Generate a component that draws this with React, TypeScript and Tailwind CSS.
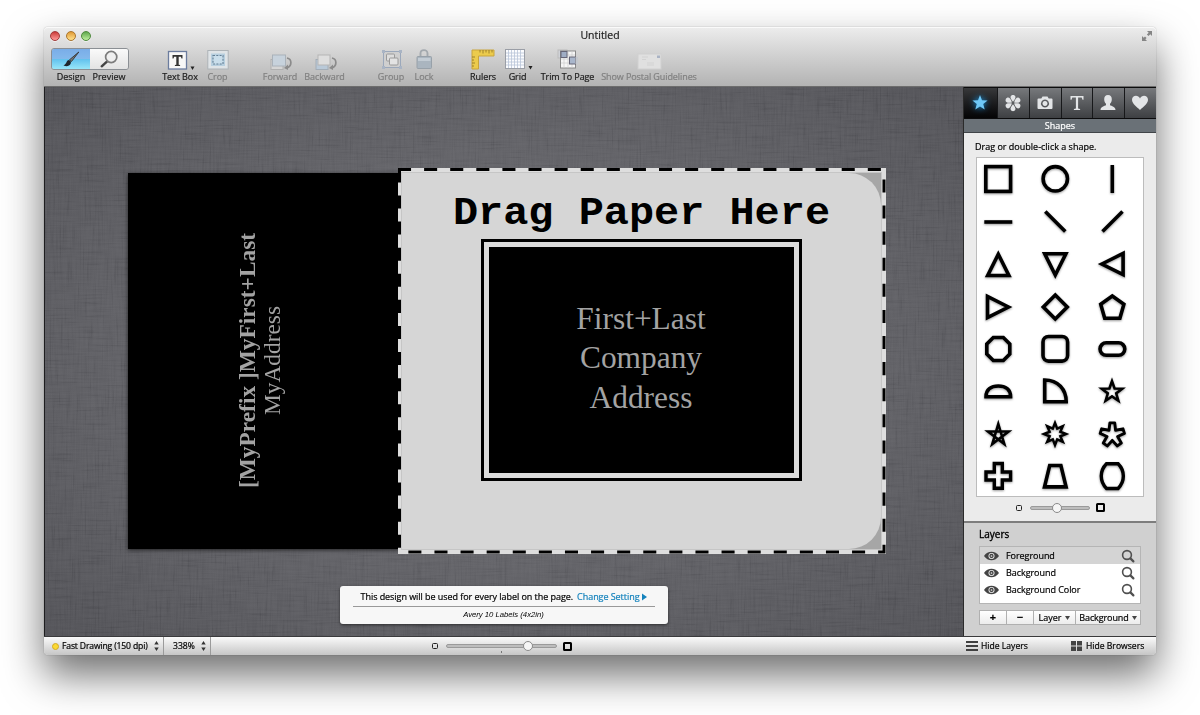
import React from 'react';

type Shape = { name: string; node: React.ReactNode };

// Regular star / polygon points around the middle of a 32x32 cell
const starPoints = (count: number, outer: number, inner: number, cy = 16) =>
  Array.from({ length: count * 2 }, (_, i) => {
    const r = i % 2 === 0 ? outer : inner;
    const a = -Math.PI / 2 + (i * Math.PI) / count;
    return `${(16 + r * Math.cos(a)).toFixed(2)},${(cy + r * Math.sin(a)).toFixed(2)}`;
  }).join(' ');

// Star with five blunt arms: two outer corners per arm and one inner corner
const bluntStar = Array.from({ length: 5 }, (_, i) => {
  const a = -Math.PI / 2 + (i * 2 * Math.PI) / 5;
  const at = (r: number, t: number) => `${(16.3 + r * Math.cos(t)).toFixed(2)},${(16.8 + r * Math.sin(t)).toFixed(2)}`;
  return [at(12.2, a - 0.2), at(12.2, a + 0.2), at(5.6, a + Math.PI / 5)].join(' ');
}).join(' ');

const SHAPES: Shape[] = [
  { name: 'square', node: <rect x="3.8" y="3.6" width="24.8" height="24.8" /> },
  { name: 'circle', node: <circle cx="16.3" cy="15.8" r="12.2" /> },
  { name: 'vline', node: <path d="M16.3 2v28" /> },
  { name: 'hline', node: <path d="M2.3 16h28" /> },
  { name: 'diag-down', node: <path d="M6.3 5.500l20 20" /> },
  { name: 'diag-up', node: <path d="M26.500 5.500l-20 20" /> },
  { name: 'tri-up', node: <path d="M16.300 6.200l10.600 21.300h-21.200z" /> },
  { name: 'tri-down', node: <path d="M16.300 27l10.600-21.300h-21.200z" /> },
  { name: 'tri-left', node: <path d="M5.800 16l21.300-10.600v21.200z" /> },
  { name: 'tri-right', node: <path d="M26.500 16l-21-10.600v21.200z" /> },
  { name: 'diamond', node: <path d="M16.300 4l12 12l-12 12l-12-12z" /> },
  { name: 'pentagon', node: <path d="M16.300 5l11.600 8.200l-4 14h-15.200l-4-14z" /> },
  { name: 'octagon', node: <path d="M11.300 4.500h10l6.500 6.500v10l-6.500 6.500h-10l-6.500-6.500v-10z" /> },
  { name: 'rounded', node: <rect x="4" y="3.500" width="24.600" height="24.600" rx="5.500" /> },
  { name: 'pill', node: <rect x="4" y="9.800" width="24.800" height="12.500" rx="6.200" /> },
  { name: 'half', node: <path d="M4 21.700c0-7 5-10.700 12.300-10.700s12.300 3.700 12.300 10.700z" /> },
  { name: 'quarter', node: <path d="M5.700 5v21.700h21.500c0-12-8-21.700-21.500-21.700z" /> },
  { name: 'star', node: <polygon points={starPoints(5, 10.8, 4.4, 17)} strokeWidth="2.6" /> },
  { name: 'pentagram', node: <path d="M16.300 6l6 20l-16.300-12.500h20.600l-16.300 12.500z" strokeWidth="2.600" /> },
  { name: 'burst', node: <polygon points={starPoints(8, 11, 5.8)} strokeWidth="2.500" /> },
  { name: 'blunt-star', node: <polygon points={bluntStar} strokeWidth="2.900" strokeLinejoin="round" /> },
  { name: 'plus', node: <path d="M12.300 3.500h8v8.500h8.300v8h-8.300v8.300h-8v-8.300h-8.300v-8h8.300z" strokeWidth="3.400" /> },
  { name: 'trapezoid', node: <path d="M10.700 5.500h11.200l5.200 21.400h-21.600z" /> },
  { name: 'barrel', node: <path d="M10.500 3.700h11.600c7 7 7 17.800 0 24.800h-11.600c-7-7-7-17.800 0-24.800z" strokeWidth="3.400" /> },
];

const LAYERS = ['Foreground', 'Background', 'Background Color'];

const ToolItem: React.FC<{ label: string; disabled?: boolean; className?: string; children: React.ReactNode }> = ({ label, disabled, className = '', children }) => (
  <div className={`flex flex-col items-center ${className}`}>
    <div className="flex h-[23px] items-center justify-center">{children}</div>
    <span className={`mt-px whitespace-nowrap text-[9px] leading-[12px] tracking-[-0.08px] ${disabled ? 'text-[#808080]' : 'text-[#1c1c1c]'}`}>{label}</span>
  </div>
);

const TrafficLight: React.FC<{ className: string }> = ({ className }) => (
  <span className={`h-[10px] w-[10px] rounded-full border bg-gradient-to-b shadow-[0_1px_0_#fff8] ${className}`} />
);

const Toolbar = () => (
  <header className="h-[60px] shrink-0 rounded-t-[4px] border-b border-[#6d6d6d] bg-gradient-to-b from-[#ededed] to-[#b3b3b3] shadow-[inset_0_1px_0_#fafafa]">
    <div className="flex h-[17px] items-center">
      <div className="flex w-[120px] gap-[5.500px] pl-[6px]">
        <TrafficLight className="border-[#a33a3a] from-[#c93838] to-[#ff9a9a]" />
        <TrafficLight className="border-[#a9742c] from-[#e09a31] to-[#ffe28c]" />
        <TrafficLight className="border-[#4e8a3c] from-[#5ea74c] to-[#bff09f]" />
      </div>
      <h1 className="flex-1 text-center text-[10.500px] leading-none text-[#222]">Untitled</h1>
      <div className="flex w-[120px] justify-end pr-[3px]">
        <svg width="12" height="12" viewBox="0 0 12 12" fill="#858585">
          <path d="M6 1h5v5l-1.700-1.700l-1.800 1.800l-1.600-1.600l1.800-1.800zM6 11h-5v-5l1.700 1.700l1.300-1.300l1.600 1.600l-1.300 1.300z" />
        </svg>
      </div>
    </div>

    <div className="flex pt-[3px]">
      <div className="ml-[7px] w-[78px]">
        <div className="mt-px flex h-[22px] overflow-hidden rounded-[3px] border border-[#8b8f94]">
          <div className="flex w-[38px] items-center justify-center bg-[linear-gradient(#79ade8_0%,#84b9ec_50%,#63c2ee_52%,#98e6f9_100%)]">
            <svg width="18" height="17" viewBox="0 0 18 17">
              <path d="M16.800 1l-7.300 9.500l-2-1.700z" fill="#777" stroke="#333" strokeWidth=".9" />
              <path d="M7 9c-3 .5-2 4-5.500 5.500c4 1.500 7.500.5 7.500-3.700z" fill="#20262c" />
            </svg>
          </div>
          <div className="flex flex-1 items-center justify-center bg-gradient-to-b from-[#fafafa] to-[#e3e3e3]">
            <svg width="20" height="19" viewBox="0 0 20 19" fill="none">
              <path d="M8.700 10.800l-6 5.500" stroke="#444" strokeWidth="2.400" strokeLinecap="round" />
              <circle cx="12.200" cy="7" r="5.600" stroke="#7c7c7c" strokeWidth="1.700" fill="#efefef" />
            </svg>
          </div>
        </div>
        <div className="mt-px flex text-[9px] leading-[12px] text-[#1c1c1c]">
          <span className="w-[40px] text-center">Design</span>
          <span className="w-[36px] text-center">Preview</span>
        </div>
      </div>

      <ToolItem label="Text Box" className="ml-[32px] w-[38px]">
        <svg width="36" height="22" viewBox="0 0 36 22">
          <rect x="6.500" y="3.500" width="18" height="17.500" fill="#f7f7f7" stroke="#6b7c9e" strokeWidth="1.300" />
          <path d="M10.500 7h10v3.500h-1l-.6-1.800h-2.200v8l1.400.4v.9h-5.200v-.9l1.400-.4v-8h-2.200l-.6 1.800h-1z" fill="#333" />
          <path d="M28.500 18.500h4l-2 3.500z" fill="#222" />
        </svg>
      </ToolItem>
      <ToolItem label="Crop" disabled className="w-[37px]">
        <svg width="22" height="22" viewBox="0 0 22 22">
          <rect x=".8" y="2.500" width="20.400" height="18.500" fill="#dfe4e7" stroke="#adb3b7" />
          <rect x="4" y="5.500" width="14" height="12.500" fill="#b7cfdf" />
          <rect x="6" y="7.500" width="10" height="8.500" fill="#c9deeb" stroke="#637f94" strokeDasharray="2 1.300" strokeWidth="1.100" />
        </svg>
      </ToolItem>
      <ToolItem label="Forward" disabled className="ml-[26px] w-[36px]">
        <svg width="24" height="18" viewBox="0 0 24 18" className="ml-[3px] mt-[6px]">
          <rect x="1" y="6.500" width="12" height="10" fill="#d5d5d5" stroke="#b0b0b0" />
          <rect x="2.500" y="2" width="13" height="11" fill="#c7d2dc" stroke="#aab2ba" />
          <path d="M17 5c5 1 5.500 8-.5 10" fill="none" stroke="#8b8b8b" strokeWidth="1.700" />
          <path d="M18 11.500v5.500l-4-2z" fill="#8b8b8b" />
        </svg>
      </ToolItem>
      <ToolItem label="Backward" disabled className="ml-[4px] w-[45px]">
        <svg width="24" height="18" viewBox="0 0 24 18" className="ml-[4px] mt-[6px]">
          <rect x="1" y="6.500" width="12" height="10" fill="#b9c9d8" stroke="#a3adb7" />
          <rect x="3" y="2" width="12" height="10" fill="#dedede" stroke="#b5b5b5" />
          <path d="M17 5c5 1 5.500 8-.5 10" fill="none" stroke="#8b8b8b" strokeWidth="1.700" />
          <path d="M18 11.500v5.500l-4-2z" fill="#8b8b8b" />
        </svg>
      </ToolItem>
      <ToolItem label="Group" disabled className="ml-[30px] w-[28px]">
        <svg width="22" height="22" viewBox="0 0 22 22" className="ml-[2px] mt-px">
          <rect x="2.500" y="3.500" width="17" height="16" fill="#cfcfcf" stroke="#9ba8bb" />
          <path d="M1 2h3v3h-3zM18 2h3v3h-3zM1 18h3v3h-3zM18 18h3v3h-3z" fill="#a9b4c4" />
          <rect x="5.500" y="6" width="8" height="7" rx="1" fill="#ddd" stroke="#9a9a9a" />
          <rect x="8.500" y="10" width="8.500" height="7" rx="1" fill="#e3e3e3" stroke="#9a9a9a" />
        </svg>
      </ToolItem>
      <ToolItem label="Lock" disabled className="ml-[8px] w-[22px]">
        <svg width="18" height="22" viewBox="0 0 18 22" className="mt-px">
          <path d="M5.500 9v-3.500c0-4.500 7-4.500 7 0v3.500" fill="none" stroke="#a3a9ae" strokeWidth="1.900" />
          <rect x="2" y="8.500" width="14.500" height="12" rx="1" fill="#aab5bf" stroke="#98a1a9" />
          <path d="M3 11.500h12.500" stroke="#c3ccd4" strokeWidth="3" />
        </svg>
      </ToolItem>
      <ToolItem label="Rulers" className="ml-[33px] w-[30px]">
        <svg width="24" height="21" viewBox="0 0 24 21" className="mt-[2px]">
          <path d="M1 1h22v6h-15.500v13h-6.500z" fill="#eccb4c" stroke="#c9a53c" />
          <path d="M9 1v2.500M12 1v3.500M15 1v2.500M18 1v3.500M21 1v2.500M1 8h3M1 11h2M1 14h3M1 17h2" stroke="#8d7224" strokeWidth=".8" />
        </svg>
      </ToolItem>
      <ToolItem label="Grid" className="ml-[4px] w-[31px]">
        <svg width="36" height="21" viewBox="0 0 36 21" className="ml-[3px] mt-[2px]">
          <rect x="4.500" y=".5" width="19" height="19" fill="#fbfcfe" stroke="#9a9ea6" />
          <path d="M7.500 1v18M10.500 1v18M13.500 1v18M16.500 1v18M19.500 1v18M5 4h18M5 7h18M5 10h18M5 13h18M5 16h18" stroke="#b9c4d8" strokeWidth=".8" />
          <path d="M27.500 17h4l-2 3.500z" fill="#222" />
        </svg>
      </ToolItem>
      <ToolItem label="Trim To Page" className="ml-[7px] w-[55px]">
        <svg width="22" height="21" viewBox="0 0 22 21" className="mt-px">
          <rect x="1" y="1" width="9" height="8" fill="#d0d3d8" stroke="#bbb" />
          <rect x="3.500" y="2" width="15" height="17" fill="#f6f6f6" stroke="#888" />
          <path d="M7 2v17M11 2v17M15 2v17M4 6h14M4 10h14M4 14h14" stroke="#ccc" strokeWidth=".7" />
          <rect x="4" y="2.500" width="6" height="6" fill="#9fadc4" stroke="#667" />
          <rect x="12.500" y="8" width="6" height="7" fill="#a9b6cb" stroke="#667" />
          <rect x="18.500" y="8" width="2.500" height="7" fill="#c4c8ce" />
        </svg>
      </ToolItem>
      <ToolItem label="Show Postal Guidelines" disabled className="ml-[7px] w-[94px]">
        <svg width="26" height="18" viewBox="0 0 26 18" className="ml-px mt-[6px]">
          <rect x="1" y="1" width="23" height="15" fill="#e0e0e0" stroke="#d0d0d0" />
          <rect x="20" y="2.500" width="3" height="2.500" fill="#aab3c4" />
          <path d="M5 4h6M5 6.500h4M10 10h7M10 12h7" stroke="#d2d2d2" />
        </svg>
      </ToolItem>
    </div>
  </header>
);

const Linen = () => (
  <svg className="pointer-events-none absolute inset-0 h-full w-full opacity-[0.13] mix-blend-soft-light">
    <filter id="warp">
      <feTurbulence type="fractalNoise" baseFrequency="0.6 0.03" numOctaves="2" seed="4" />
      <feColorMatrix type="matrix" values="2.2 0 0 0 -.55  2.2 0 0 0 -.55  2.2 0 0 0 -.55  0 0 0 0 1" />
    </filter>
    <filter id="weft">
      <feTurbulence type="fractalNoise" baseFrequency="0.03 0.6" numOctaves="2" seed="9" />
      <feColorMatrix type="matrix" values="2.2 0 0 0 -.55  2.2 0 0 0 -.55  2.2 0 0 0 -.55  0 0 0 0 .5" />
    </filter>
    <rect width="100%" height="100%" filter="url(#warp)" />
    <rect width="100%" height="100%" filter="url(#weft)" />
  </svg>
);

const Canvas = () => (
  <main className="relative flex flex-1 flex-col items-center justify-end overflow-hidden border-l border-[#1e1e20] bg-[radial-gradient(ellipse_at_center,#6a6a6f_0%,#626267_50%,#525257_100%)]">
    <Linen />

    {/* Label artwork on the free canvas */}
    <div className="absolute left-[83px] top-[86px] flex h-[376px] w-[272px] items-center justify-center bg-black shadow-[0_1px_4px_#000a] [-webkit-text-stroke:0]">
      <div className="-rotate-90 whitespace-nowrap pb-[7px] pl-[2px] text-center font-['Liberation_Serif',serif] text-[23.400px] leading-[25px] text-[#a3a3a3]">
        <p className="font-bold">[MyPrefix ]MyFirst+Last</p>
        <p>MyAddress</p>
      </div>
    </div>
    <div className="absolute left-[353px] top-[81px] h-[386px] w-[488px] bg-[#dedede] p-[4px] pl-[3px] [-webkit-text-stroke:0]">
      <div className="h-full w-full border border-[#c6c6c6] bg-[#a6a6a6]">
        <div className="flex h-full w-full flex-col items-center rounded-r-[32px] bg-[#d6d6d6]">
          <h2 className="mt-[14px] origin-bottom scale-y-[0.93] whitespace-nowrap font-['Liberation_Mono',monospace] text-[41.900px] font-bold leading-[50px] text-black">Drag Paper Here</h2>
          <div className="mt-[2px] h-[242px] w-[321px] border-[3px] border-black bg-[#dcdcdc] p-[5px]">
            <div className="flex h-full w-full flex-col items-center justify-center bg-black pb-[4px] pr-px font-['Liberation_Serif',serif] text-[31.400px] leading-[39.300px] text-[#a3a3a3]">
              <p>First+Last</p>
              <p>Company</p>
              <p>Address</p>
            </div>
          </div>
        </div>
      </div>
      <svg className="absolute inset-0" width="488" height="386" viewBox="0 0 488 386" fill="none">
        <path d="M0 1.500H486V384H1.500V0" stroke="#000" strokeWidth="3" strokeDasharray="13.050 13.050" />
      </svg>
    </div>

    <div className="relative mb-[12px] flex h-[38px] w-[328px] flex-col items-center rounded-[3px] bg-[#f7f7f7] px-[13px] shadow-[0_1px_3px_#0008]">
      <p className="flex h-[21px] w-full items-center justify-center whitespace-nowrap border-b border-[#999] pt-px pl-px text-[9px] tracking-[-0.05px] text-black">
        This design will be used for every label on the page.
        <a className="ml-[4px] flex items-center text-[#1583bd]">
          Change Setting
          <svg width="6" height="8" viewBox="0 0 6 8" className="ml-[3px]"><path d="M0 .5v7l5-3.500z" fill="#1583bd" /></svg>
        </a>
      </p>
      <p className="mt-[3px] pr-px font-['Liberation_Sans',sans-serif] text-[7.700px] italic leading-[10px] text-black [-webkit-text-stroke:0]">Avery 10 Labels (4x2in)</p>
    </div>
  </main>
);

const TAB_ICONS: React.ReactNode[] = [
  <polygon key="star" points={starPoints(5, 8, 3.4)} fill="#6fc8f7" className="drop-shadow-[0_0_3px_#1596e8]" />,
  <g key="flower">
    {[0, 60, 120, 180, 240, 300].map((a) => (
      <path key={a} d="M16 14.800c-2-2.500-3-4.300-2.200-5.800c.8-1.500 3.600-1.500 4.400 0c.8 1.500-.2 3.300-2.200 5.800z" transform={`rotate(${a} 16 16)`} />
    ))}
  </g>,
  <path key="camera" fillRule="evenodd" d="M9.500 11.500h2.800l1.200-2h5l1.200 2h2.800q1 0 1 1v8.500q0 1-1 1h-13q-1 0-1-1v-8.500q0-1 1-1zM16 12.500a4 4 0 1 0 .01 0zM16 14a2.500 2.500 0 1 1-.01 0z" />,
  <path key="type" d="M9.500 9h13v3.800h-1l-.8-2.400h-3.600v11.200l2 .5v.9h-6.200v-.9l2-.5v-11.200h-3.600l-.8 2.400h-1z" />,
  <path key="person" d="M16 8c2.700 0 3.800 1.800 3.800 4.200c0 2-.8 3.500-1.800 4.500v1.500c1.500.8 5.500 1.300 5.500 4.800h-15c0-3.500 4-4 5.500-4.800v-1.500c-1-1-1.800-2.500-1.800-4.500c0-2.400 1.100-4.200 3.800-4.200z" />,
  <path key="heart" d="M16 23c-3-3-8-6.200-8-10.200c0-4.800 6.300-5.600 8-1.300c1.700-4.300 8-3.500 8 1.300c0 4-5 7.200-8 10.200z" />,
];

const ZoomSlider: React.FC<{ width: string; thumb: string }> = ({ width, thumb }) => (
  <div className="flex items-center gap-[8px]">
    <span className="h-[6px] w-[6px] rounded-[1.500px] border-[1.500px] border-[#222]" />
    <div className={`relative h-[4px] rounded-full border border-[#9a9a9a] bg-[#bdbdbd] ${width}`}>
      <span className={`absolute top-[-4px] h-[10px] w-[10px] rounded-full border border-[#8a8a8a] bg-[#f6f6f6] ${thumb}`} />
    </div>
    <span className="ml-[-2px] h-[9px] w-[9px] rounded-[1.500px] border-2 border-black" />
  </div>
);

const Sidebar = () => (
  <aside className="flex w-[193px] shrink-0 flex-col border-l border-[#2b2b2b] bg-[#ebebeb]">
    <nav className="flex h-[32px] shrink-0 overflow-hidden border-y border-[#0c0c0d]">
      {TAB_ICONS.map((icon, i) => (
        <div
          key={i}
          className={`flex items-center justify-center pr-px ${i === 0 ? 'w-[33px] bg-gradient-to-b from-[#38393b] to-[#050506]' : 'min-w-0 flex-1 border-l border-[#17181a] bg-gradient-to-b from-[#77797c] to-[#3e4043]'}`}
        >
          <svg width="32" height="32" viewBox="0 0 32 32" className="shrink-0" fill="#e3e5e7">{icon}</svg>
        </div>
      ))}
    </nav>
    <div className="h-[14px] shrink-0 border-b border-[#404448] bg-[#6a7177] text-center text-[9px] leading-[14px] text-white">Shapes</div>

    <p className="ml-[11px] mt-[8px] shrink-0 whitespace-nowrap text-[9px] leading-[12px] text-black">Drag or double-click a shape.</p>
    <div className="ml-[12px] mt-[4px] grid h-[340px] w-[168px] shrink-0 grid-cols-[57px_57px_57px] content-start overflow-hidden border border-[#bcbcbc] bg-white">
      {SHAPES.map((s) => (
        <div key={s.name} className="flex h-[42.450px] items-center pl-[5px]">
          <svg width="32" height="32" viewBox="0 0 32 32" fill="none" stroke="#000" strokeWidth="3.600" strokeLinejoin="miter" className="drop-shadow-[0_1px_1px_#0006]">
            {s.node}
          </svg>
        </div>
      ))}
    </div>
    <div className="mt-[5px] flex h-[11px] shrink-0 items-center justify-center">
      <ZoomSlider width="w-[60px]" thumb="left-[21px]" />
    </div>

    <section className="mt-auto h-[115px] shrink-0 border-t-2 border-[#7d7d7d] bg-[#d0d0d0] pl-[15px]">
      <h3 className="mt-[4px] text-[10px] leading-[14px] text-black [-webkit-text-stroke:0.35px]">Layers</h3>
      <div className="mt-[5px] h-[58px] w-[162px] border border-[#b5b5b5] bg-white">
        {LAYERS.map((name, i) => (
          <div key={name} className={`flex h-[17px] items-center pl-[4px] pr-[5px] ${i === 0 ? 'bg-[#d4d4d4]' : ''}`}>
            <svg width="15" height="10" viewBox="0 0 16 10">
              <path d="M0 5c4-6 12-6 16 0c-4 6-12 6-16 0z" fill="#444" />
              <circle cx="8" cy="5" r="3.200" fill="#eee" />
              <circle cx="8" cy="5" r="2.300" fill="#444" />
              <circle cx="8" cy="5" r=".9" fill="#ddd" />
            </svg>
            <span className="ml-[7px] flex-1 whitespace-nowrap text-[9px] leading-none tracking-[-0.05px] text-black">{name}</span>
            <svg width="14" height="14" viewBox="0 0 14 14" fill="none" stroke="#505050">
              <circle cx="6" cy="6" r="4.400" strokeWidth="1.600" />
              <path d="M9.400 9.400l3 3" strokeWidth="2.200" strokeLinecap="round" />
            </svg>
          </div>
        ))}
      </div>
      <div className="mt-[6px] flex h-[15px] w-[162px] border border-[#b0b0b0] bg-gradient-to-b from-white to-[#ececec] text-[9px] leading-[13px] text-black">
        <span className="w-[26px] text-center text-[11px] font-bold leading-[12px]">+</span>
        <span className="w-[27px] border-l border-[#b0b0b0] text-center text-[11px] font-bold leading-[12px]">−</span>
        <span className="flex w-[42px] items-center justify-center gap-[4px] border-l border-[#b0b0b0]">
          Layer
          <svg width="5" height="4" viewBox="0 0 5 4"><path d="M0 0h5l-2.500 4z" fill="#444" /></svg>
        </span>
        <span className="flex flex-1 items-center justify-center gap-[3px] border-l border-[#b0b0b0] tracking-[-0.1px]">
          Background
          <svg width="5" height="4" viewBox="0 0 5 4"><path d="M0 0h5l-2.500 4z" fill="#444" /></svg>
        </span>
      </div>
    </section>
  </aside>
);

const Stepper = () => (
  <svg width="5" height="10" viewBox="0 0 5 10" fill="#333">
    <path d="M.3 3.500h4.400l-2.200-3.500zM.3 6.500h4.400l-2.200 3.500z" />
  </svg>
);

const StatusBar = () => (
  <footer className="flex h-[19px] shrink-0 items-stretch overflow-hidden rounded-b-[4px] border-t border-[#3a3a3c] bg-gradient-to-b from-[#fafafa] to-[#c6c6c6] text-[8.600px] leading-none text-black">
    <div className="flex w-[120px] items-center border-r border-[#9b9b9b] pl-[8px]">
      <span className="h-[7px] w-[7px] shrink-0 rounded-full border border-[#d2aa25] bg-[#fbd934]" />
      <span className="ml-[3px] w-[92px] whitespace-nowrap tracking-[-0.15px]">Fast Drawing (150 dpi)</span>
      <Stepper />
    </div>
    <div className="flex w-[47px] items-center border-r border-[#9b9b9b] pl-[9px]">
      <span className="w-[28px]">338%</span>
      <Stepper />
    </div>
    <div className="relative ml-[221px] flex items-center">
      <ZoomSlider width="w-[111px]" thumb="left-[76px]" />
      <span className="absolute bottom-[2px] left-[69px] h-[2px] w-px bg-[#777]" />
    </div>
    <div className="ml-auto flex items-center">
      <svg width="12" height="10" viewBox="0 0 12 10"><path d="M0 1h12M0 5h12M0 9h12" stroke="#3f3f3f" strokeWidth="1.900" /></svg>
      <span className="ml-[3px] w-[90px] whitespace-nowrap">Hide Layers</span>
      <svg width="11" height="10" viewBox="0 0 11 10" fill="#444"><path d="M0 0h5v4.500h-5zM6 0h5v4.500h-5zM0 5.500h5v4.500h-5zM6 5.500h5v4.500h-5z" /></svg>
      <span className="ml-[4px] w-[70px] whitespace-nowrap">Hide Browsers</span>
    </div>
  </footer>
);

export default function App() {
  return (
    <div className="h-[715px] w-[1200px] overflow-hidden bg-white pl-[44px] pt-[27px] font-['Open_Sans','Noto_Sans',sans-serif] [-webkit-text-stroke:0.2px]">
      <div className="flex h-[628px] w-[1112px] flex-col rounded-[4px] shadow-[0_20px_40px_rgba(0,0,0,0.57),0_0_1px_#0008]">
        <Toolbar />
        <div className="flex min-h-0 flex-1">
          <Canvas />
          <Sidebar />
        </div>
        <StatusBar />
      </div>
    </div>
  );
}
